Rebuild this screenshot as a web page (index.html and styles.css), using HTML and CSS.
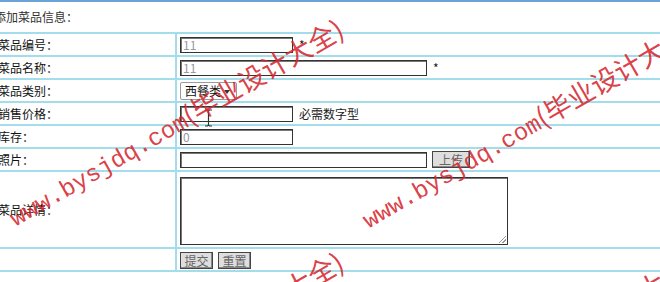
FILE: index.html
```html
<!doctype html>
<html lang="zh-cn">
<head>
  <meta charset="utf-8">
  <title>添加菜品信息</title>
  <link rel="stylesheet" href="styles.css">
</head>
<body>
  <div class="top-bar"></div>

  <form class="dish-form">
    <div class="form-title">添加菜品信息：</div>

    <div class="row">
      <div class="label">菜品编号：</div>
      <div class="field">
        <span class="input short">11</span>
        <span class="star">*</span>
      </div>
    </div>

    <div class="row">
      <div class="label">菜品名称：</div>
      <div class="field">
        <span class="input long">11</span>
        <span class="star">*</span>
      </div>
    </div>

    <div class="row">
      <div class="label">菜品类别：</div>
      <div class="field">
        <span class="select">西餐类<i class="arrow"></i></span>
      </div>
    </div>

    <div class="row">
      <div class="label">销售价格：</div>
      <div class="field">
        <span class="input short"></span>
        <span class="hint">必需数字型</span>
      </div>
    </div>

    <div class="row">
      <div class="label">库存：</div>
      <div class="field">
        <span class="input short">0</span>
      </div>
    </div>

    <div class="row">
      <div class="label">照片：</div>
      <div class="field">
        <span class="input long"></span>
        <span class="btn upload">上传</span>
      </div>
    </div>

    <div class="row tall">
      <div class="label">菜品详情：</div>
      <div class="field">
        <span class="textarea"><i class="grip"></i></span>
      </div>
    </div>

    <div class="row">
      <div class="label"></div>
      <div class="field buttons">
        <span class="btn">提交</span>
        <span class="btn">重置</span>
      </div>
    </div>
  </form>

  <!-- cursor over the price box -->
  <svg class="ibeam" width="9" height="18" viewBox="0 0 9 18">
    <path d="M1 1h2.5l1 1 1-1H8M4.5 2v14M1 17h2.5l1-1 1 1H8" fill="none" stroke="#333" stroke-width="1.2"/>
  </svg>

  <!-- watermark -->
  <div class="watermark">
    <span class="mark m1"><b>www.bysjdq.com</b>(毕业设计大全)</span>
    <span class="mark m2"><b>www.bysjdq.com</b>(毕业设计大全)</span>
    <span class="mark m3"><b>www.bysjdq.com</b>(毕业设计大全)</span>
    <span class="mark m4"><b>www.bysjdq.com</b>(毕业设计大全)</span>
  </div>
</body>
</html>
```

FILE: styles.css
```css
html,
body {
  margin: 0;
  padding: 0;
  background: #fff;
  overflow: hidden;
  font-family: "Noto Sans CJK SC", "Liberation Sans", sans-serif;
  font-size: 12px;
  color: #222;
}

.top-bar {
  height: 2px;
  background: #6ba3d6;
}

.dish-form {
  margin-left: -2px;
  width: 700px;
}

.form-title {
  height: 30px;
  line-height: 30px;
  margin-left: -4px;
  border-bottom: 2px solid #a3dcea;
  color: #333;
}

.row {
  display: grid;
  grid-template-columns: 179px 1fr;
  height: 21px;
  border-bottom: 2px solid #a3dcea;
}

.row.tall {
  height: 75px;
}

.label {
  border-right: 2px solid #a3dcea;
  display: flex;
  align-items: center;
  color: #111;
}

.field {
  display: flex;
  align-items: center;
  padding-left: 3px;
}

.input {
  box-sizing: border-box;
  height: 16px;
  border: 1px solid #333;
  box-shadow: inset 1px 1px 0 #777;
  padding-left: 2px;
  line-height: 14px;
  color: #999;
  font-size: 12px;
}

.input.short {
  width: 113px;
}

.input.long {
  width: 247px;
}

.star {
  margin-left: 6px;
  font-size: 12px;
  color: #222;
}

.hint {
  margin-left: 6px;
  color: #222;
}

.select {
  box-sizing: border-box;
  width: 57px;
  height: 18px;
  border: 1px solid #9a9a9a;
  border-radius: 2px;
  padding-left: 4px;
  line-height: 16px;
  color: #111;
  position: relative;
}

.arrow {
  position: absolute;
  right: 6px;
  top: 7px;
  border-left: 3px solid transparent;
  border-right: 3px solid transparent;
  border-top: 4px solid #333;
}

.textarea {
  box-sizing: border-box;
  width: 328px;
  height: 68px;
  margin-top: 3px;
  border: 1px solid #333;
  box-shadow: inset 1px 1px 0 #777;
  position: relative;
}

.grip {
  position: absolute;
  right: 1px;
  bottom: 1px;
  width: 7px;
  height: 7px;
  background: linear-gradient(135deg, transparent 45%, #999 45%, #999 55%, transparent 55%, transparent 70%, #999 70%, #999 80%, transparent 80%);
}

.btn {
  box-sizing: border-box;
  height: 17px;
  padding: 0;
  border: 1px solid #444;
  box-shadow: inset -1px -1px 0 #888;
  background: #dedede;
  color: #666;
  line-height: 15px;
  font-size: 12px;
  text-align: center;
  white-space: nowrap;
}

.btn.upload {
  width: 38px;
  margin-left: 5px;
}

.buttons {
  gap: 5px;
  padding-top: 2px;
}

.buttons .btn {
  width: 33px;
}

.ibeam {
  position: absolute;
  left: 204px;
  top: 109px;
}

.watermark {
  position: absolute;
  left: 0;
  top: 0;
  width: 660px;
  height: 282px;
  overflow: hidden;
  pointer-events: none;
}

.mark {
  position: absolute;
  white-space: nowrap;
  transform: translate(-50%, -50%) rotate(-30deg);
  color: rgba(214, 40, 48, 0.9);
  font-family: "Noto Sans CJK SC", sans-serif;
  font-size: 27px;
  line-height: 1;
}

.mark b {
  font-family: "Liberation Mono", monospace;
  font-weight: normal;
  font-size: 24px;
}

.m1 {
  left: 176px;
  top: 123px;
}

.m2 {
  left: 529px;
  top: 125px;
}

.m3 {
  left: 176px;
  top: 356px;
}

.m4 {
  left: 529px;
  top: 358px;
}
```
